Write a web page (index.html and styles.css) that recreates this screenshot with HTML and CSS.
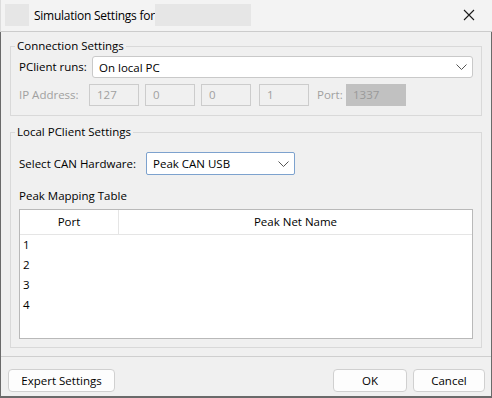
FILE: index.html
```html
<!DOCTYPE html>
<html>
<head>
<meta charset="utf-8">
<link rel="stylesheet" href="styles.css">
</head>
<body>
<div class="window">
  <div class="titlebar">
    <div class="app-icon"></div>
    <span class="title">Simulation Settings for</span>
    <div class="title-blank"></div>
    <div class="spacer"></div>
    <svg class="close" width="12" height="12" viewBox="0 0 12 12"><path d="M1 1 L11 11 M11 1 L1 11" stroke="#1a1a1a" stroke-width="1.1" fill="none"/></svg>
  </div>
  <div class="content">
    <fieldset class="group g1">
      <legend>Connection Settings</legend>
      <div class="row">
        <span class="label runs">PClient runs:</span>
        <div class="combo wide"><span>On local PC</span><svg class="chev" width="11" height="6" viewBox="0 0 11 6"><path d="M0.5 0.5 L5.5 5.5 L10.5 0.5" stroke="#555" stroke-width="1" fill="none"/></svg></div>
      </div>
      <div class="row iprow">
        <span class="label dis ipl">IP Address:</span>
        <div class="ip">127</div>
        <div class="ip">0</div>
        <div class="ip">0</div>
        <div class="ip ip4">1</div>
        <span class="label dis portl">Port:</span>
        <div class="port">1337</div>
      </div>
    </fieldset>
    <fieldset class="group g2">
      <legend>Local PClient Settings</legend>
      <div class="row canrow">
        <span class="label canl">Select CAN Hardware:</span>
        <div class="combo can"><span>Peak CAN USB</span><svg class="chev" width="11" height="6" viewBox="0 0 11 6"><path d="M0.5 0.5 L5.5 5.5 L10.5 0.5" stroke="#555" stroke-width="1" fill="none"/></svg></div>
      </div>
      <div class="label tlabel">Peak Mapping Table</div>
      <div class="table">
        <div class="thead">
          <div class="th c1">Port</div>
          <div class="th c2">Peak Net Name</div>
        </div>
        <div class="tr">1</div>
        <div class="tr">2</div>
        <div class="tr">3</div>
        <div class="tr">4</div>
      </div>
    </fieldset>
  </div>
  <div class="footer">
    <button class="btn expert">Expert Settings</button>
    <div class="spacer"></div>
    <button class="btn ok">OK</button>
    <button class="btn cancel">Cancel</button>
  </div>
</div>
</body>
</html>
```
FILE: styles.css
```css
* { box-sizing: border-box; }
html, body { margin: 0; padding: 0; background: #f0f0f0; }
body { font-family: "Open Sans", "Noto Sans", sans-serif; font-size: 11.5px; color: #000; }
.window {
  width: 492px; height: 398px;
  background: #f0f0f0;
  display: flex; flex-direction: column;
  border-left: 1px solid #6a6a6a;
  border-right: 1px solid #6a6a6a;
  border-bottom: 2px solid #6a6a6a;
}
.titlebar {
  height: 32px; flex: none;
  display: flex; align-items: center;
  background: #f3f3f3;
  border-bottom: 1px solid #cccccc;
  padding: 0 0 1px 4px;
  margin-left: -1px; margin-right: -1px;
  border-left: 1px solid #dcdcdc;
}
.app-icon { width: 24px; height: 22px; background: #e6e6e6; }
.title { margin-left: 5px; width: 121px; white-space: nowrap; font-size: 12px; letter-spacing: -0.25px; }
.title-blank { width: 96px; height: 22px; background: #e6e6e6; }
.spacer { flex: 1; }
.close { margin-right: 17px; }
.content { flex: 1; padding: 6px 9px 0 9px; display: flex; flex-direction: column; }
.group {
  margin: 0; border: 1px solid #d9d9d9;
  padding: 0 8px; min-width: 0;
}
legend { padding: 0 2px; margin-left: -4px; line-height: 16px; }
.row { display: flex; align-items: center; }
.g1 { padding-top: 2px; padding-bottom: 9px; }
.g2 { margin-top: 8px; padding-top: 12px; padding-bottom: 8px; }
.label { line-height: 16px; white-space: nowrap; }
.dis { color: #a0a0a0; }
.runs { width: 73px; }
.combo {
  height: 22px; background: #fff; border: 1px solid #c9c9c9; border-radius: 3px;
  display: flex; align-items: center; padding: 0 5px 0 6px;
}
.combo span { flex: 1; }
.wide { flex: 1; }
.iprow { margin-top: 6px; }
.ipl { width: 70px; }
.ip {
  width: 50px; height: 22px; border: 1px solid #cccccc; color: #a0a0a0;
  padding-left: 7px; line-height: 20px; margin-right: 6px;
}
.ip4 { margin-left: 2px; margin-right: 8px; }
.portl { width: 29px; }
.port { width: 60px; height: 22px; background: #c1c1c1; color: #999; line-height: 22px; padding-left: 7px; }
.canl { width: 127px; }
.combo.can { width: 149px; height: 23px; border-color: #7da2ce; border-radius: 2px; padding-left: 6px; }
.tlabel { margin-top: 13px; }
.table { margin-top: 5px; height: 130px; background: #fff; border: 1px solid #b9b9b9; }
.thead { display: flex; height: 25px; border-bottom: 1px solid #e5e5e5; }
.th { text-align: center; line-height: 24px; }
.c1 { width: 99px; border-right: 1px solid #e5e5e5; }
.c2 { flex: 1; }
.tr { height: 20px; line-height: 20px; padding-left: 3px; }
.footer {
  flex: none; height: 42px; display: flex; align-items: flex-start;
  border-top: 1px solid #cfcfcf; padding: 12px 6px 0 7px; margin-top: 8px;
}
.btn {
  font: inherit; color: #000; height: 23px; background: #fdfdfd;
  border: 1px solid #d0d0d0; border-radius: 4px; padding: 0;
}
.expert { width: 107px; }
.ok { width: 74px; margin-right: 6px; }
.cancel { width: 72px; }
```
